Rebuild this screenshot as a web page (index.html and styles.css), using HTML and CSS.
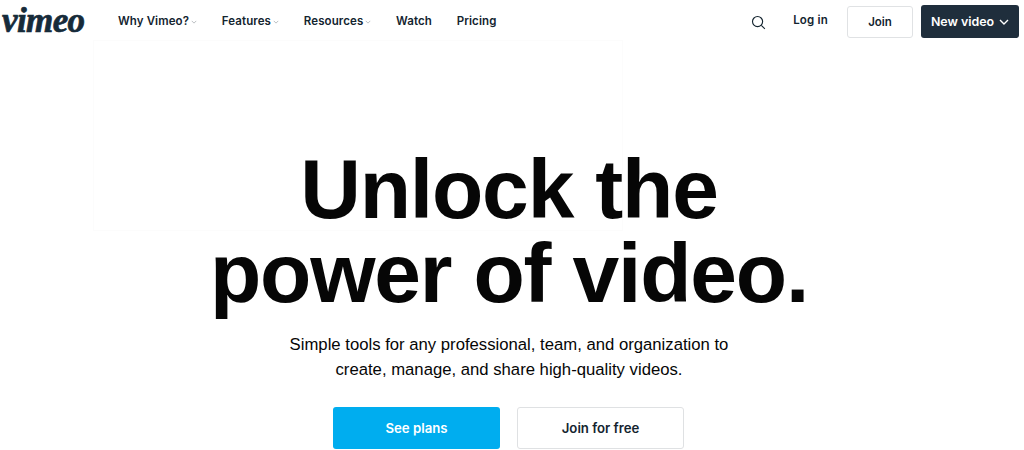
FILE: index.html
```html
<!DOCTYPE html>
<html lang="en">
<head>
    <meta charset="UTF-8">
    <meta name="viewport" content="width=device-width, initial-scale=1.0">
    <title>Vimeo</title>
    <link rel="stylesheet" href="styles.css">
</head>
<body>
    <div class="ghost-box"></div>

    <header class="topbar">
        <a class="logo" href="#">vimeo</a>
        <nav class="main-nav">
            <a href="#">Why Vimeo?<svg class="caret" viewBox="0 0 8 5"><path d="M1 1l3 3 3-3"/></svg></a>
            <a href="#">Features<svg class="caret" viewBox="0 0 8 5"><path d="M1 1l3 3 3-3"/></svg></a>
            <a href="#">Resources<svg class="caret" viewBox="0 0 8 5"><path d="M1 1l3 3 3-3"/></svg></a>
            <a href="#">Watch</a>
            <a href="#">Pricing</a>
        </nav>
        <div class="actions">
            <svg class="search" viewBox="0 0 16 16"><circle cx="7" cy="7" r="5.4"/><path d="M11 11l3.8 3.8"/></svg>
            <a class="login" href="#">Log in</a>
            <a class="btn-join" href="#">Join</a>
            <a class="btn-new" href="#">New video<svg class="chev" viewBox="0 0 10 6"><path d="M1 1l4 4 4-4"/></svg></a>
        </div>
    </header>

    <main class="hero">
        <h1>Unlock the<br>power of video.</h1>
        <p>Simple tools for any professional, team, and organization to<br>create, manage, and share high-quality videos.</p>
        <div class="cta-row">
            <a class="cta cta-blue" href="#">See plans</a>
            <a class="cta cta-white" href="#">Join for free</a>
        </div>
    </main>
</body>
</html>
```

FILE: styles.css
```css
html, body {
    height: 450px;
    overflow: hidden;
}
body {
    margin: 0;
    width: 1019px;
    background-color: #fff;
    color: #060606;
    font-family: "Liberation Sans", Arial, sans-serif;
}
a {
    color: inherit;
    text-decoration: none;
}
.ghost-box {
    position: absolute;
    z-index: -1;
    left: 93px;
    top: 40px;
    width: 528px;
    height: 189px;
    border: 1px solid #fcfcfc;
}
.topbar {
    position: relative;
    display: flex;
    align-items: center;
    height: 42px;
    font-family: Inter, "Liberation Sans", sans-serif;
    font-weight: 600;
    font-size: 11.5px;
    color: #13242f;
}
.logo {
    width: 118px;
    margin-top: -1px;
    padding-left: 2px;
    box-sizing: border-box;
    font-family: "Liberation Serif", serif;
    font-style: italic;
    font-weight: 700;
    font-size: 35px;
    letter-spacing: -0.6px;
    -webkit-text-stroke: 0.7px #162b3a;
    color: #162b3a;
}
.main-nav {
    display: flex;
    gap: 24.75px;
    margin-top: -1px;
    letter-spacing: 0.1px;
}
.main-nav a {
    display: flex;
    align-items: center;
}
.caret {
    width: 6px;
    height: 4px;
    margin: 2px 0 0 2px;
    fill: none;
    stroke: #a4aaae;
    stroke-width: 1;
}
.actions {
    display: flex;
    align-items: center;
    margin-left: auto;
}
.search {
    width: 15px;
    height: 15px;
    margin: 3px 27px 0 0;
    fill: none;
    stroke: #13242f;
    stroke-width: 1.2;
}
.login {
    margin: -3px 19px 0 0;
    letter-spacing: 0.2px;
}
.btn-join {
    display: flex;
    align-items: center;
    justify-content: center;
    box-sizing: border-box;
    width: 66px;
    height: 32px;
    margin: 1px 8px 0 0;
    border: 1px solid #e0e2e4;
    border-radius: 3px;
}
.btn-new {
    display: flex;
    align-items: center;
    justify-content: center;
    box-sizing: border-box;
    width: 98px;
    height: 33px;
    margin-top: 1px;
    border-radius: 3px;
    background-color: #1f2e3c;
    color: #fff;
    font-size: 12.4px;
}
.chev {
    width: 10px;
    height: 6px;
    margin-left: 5px;
    fill: none;
    stroke: #fff;
    stroke-width: 1.4;
}
.hero {
    display: flex;
    flex-direction: column;
    align-items: center;
    width: 1018px;
    text-align: center;
}
h1 {
    margin: 105px 0 0;
    font-size: 84px;
    line-height: 84px;
    font-weight: 700;
    letter-spacing: -1.2px;
}
.hero p {
    margin: 17px 0 0;
    font-size: 16.7px;
    line-height: 25px;
}
.cta-row {
    display: flex;
    gap: 17px;
    margin: 25px 1px 0 0;
    font-family: Inter, "Liberation Sans", sans-serif;
    font-size: 13.2px;
    font-weight: 600;
}
.cta {
    display: flex;
    align-items: center;
    justify-content: center;
    box-sizing: border-box;
    width: 167px;
    height: 42px;
    border-radius: 3px;
}
.cta-blue {
    background-color: #00adef;
    color: #fff;
}
.cta-white {
    border: 1px solid #dfe1e3;
    color: #13242f;
}
```
